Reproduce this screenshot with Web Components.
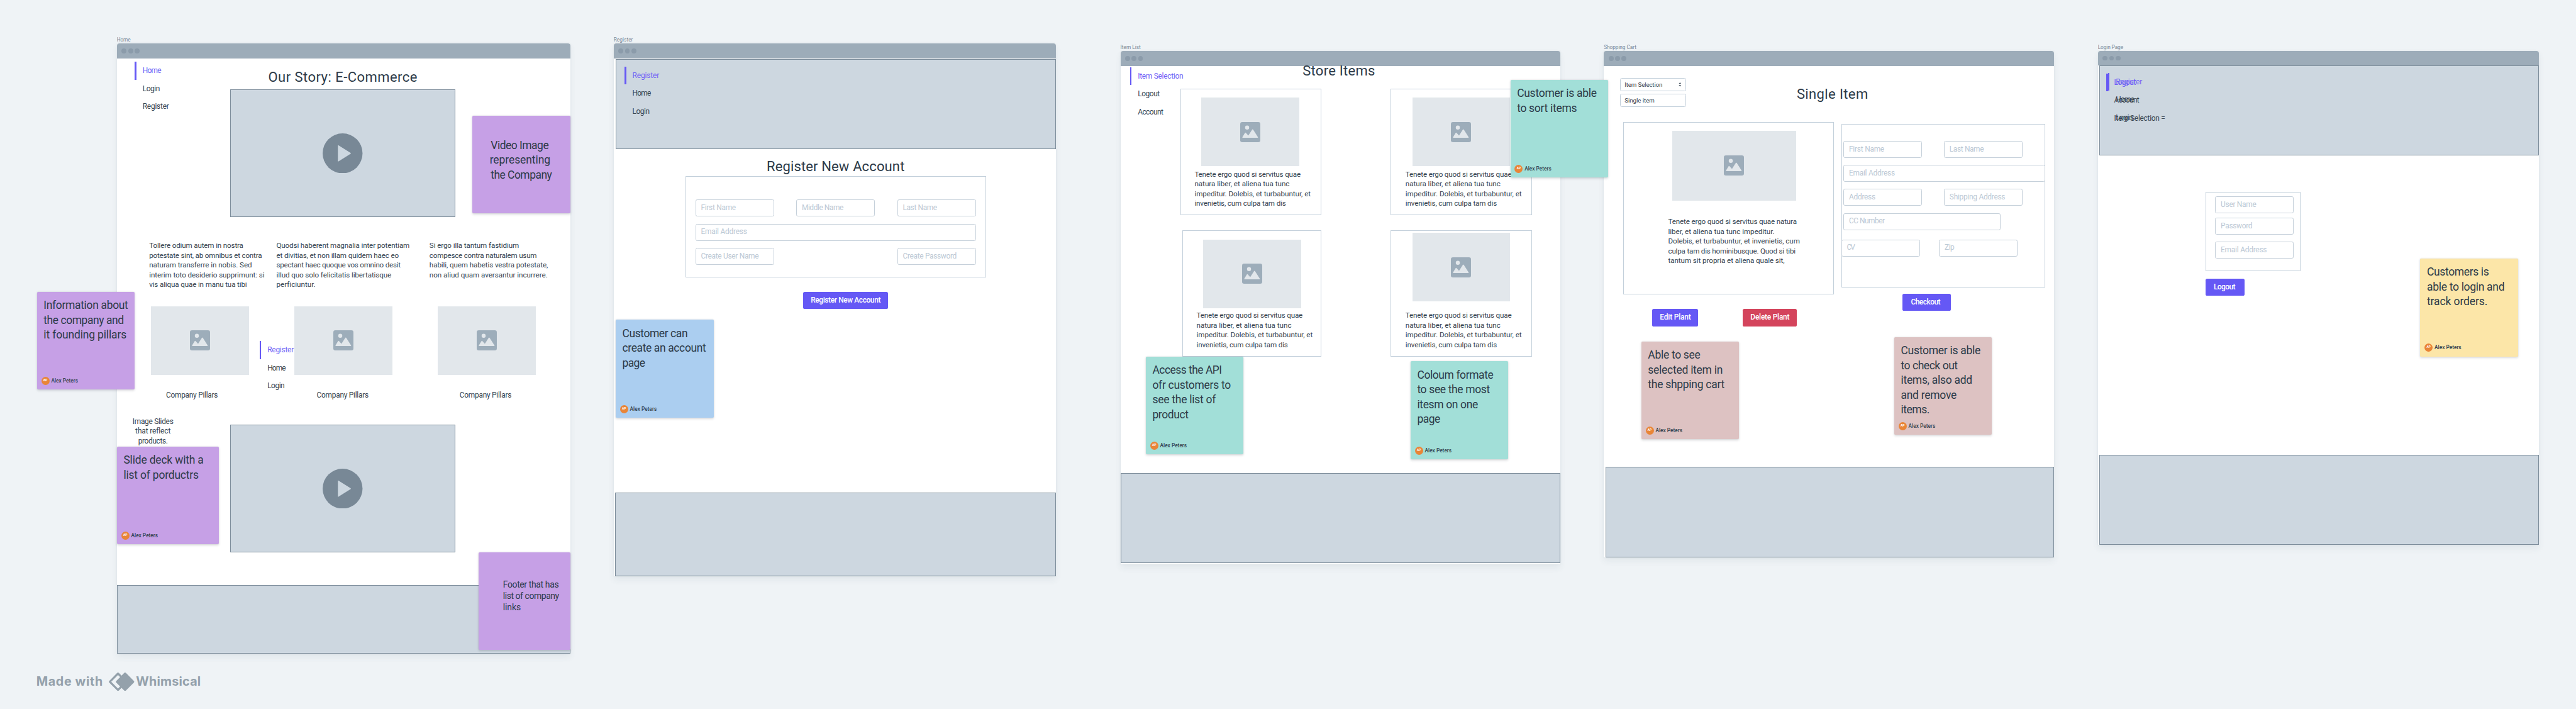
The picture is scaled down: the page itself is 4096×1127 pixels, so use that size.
<!DOCTYPE html>
<html lang="en">
<head>
<meta charset="utf-8">
<title>E-Commerce wireframes</title>
<style>
  html, body { margin: 0; height: 1127px; overflow: hidden; background: #eff3f6; }
  body { font-family: Roboto, "Liberation Sans", sans-serif; font-size: 18.4px; color: #35434f; }
  .row { display: flex; align-items: flex-start; }
  .col { display: flex; flex-direction: column; align-items: flex-start; }
  .center { align-items: center; }
  .para { display: flex; flex-direction: column; font-size: 18px; }
  .title { font-size: 34px; line-height: 40px; color: #2c3a48; }
  .foot { margin-top: auto; }
</style>
</head>
<body>
<wf-canvas>
  <!-- Home -->
  <wf-frame x="287" y="106.3" w="1113" h="1498.2">
    <t-line slot="label" w="32.6">Home</t-line>
    <div class="row">
      <wf-nav style="margin:9px 0 0 44px;width:234.2px"><t-line w="45">Home</t-line><t-line w="41.5">Login</t-line><t-line w="64">Register</t-line></wf-nav>
      <div class="col center" style="width:553.5px">
        <t-line class="title" style="margin-top:27.6px" w="365.3">Our Story: E-Commerce</t-line>
        <wf-video style="margin-top:8.6px"></wf-video>
      </div>
    </div>
    <div class="row" style="margin:59.4px 0 0 79.3px;height:120px">
      <div class="para" style="width:312.4px"><t-line w="230.6">Tollere odium autem in nostra</t-line><t-line w="276.4">potestate sint, ab omnibus et contra</t-line><t-line w="251.7">naturam transferre in nobis. Sed</t-line><t-line w="282.5">interim toto desiderio supprimunt: si</t-line><t-line w="239.4">vis aliqua quae in manu tua tibi</t-line></div>
      <div class="para" style="width:375.8px"><t-line w="326.5">Quodsi haberent magnalia inter potentiam</t-line><t-line w="300">et divitias, et non illam quidem haec eo</t-line><t-line w="304.5">spectant haec quoque vos omnino desit</t-line><t-line w="281.6">illud quo solo felicitatis libertatisque</t-line><t-line w="94.2">perficiuntur.</t-line></div>
      <div class="para"><t-line w="219.1">Si ergo illa tantum fastidium</t-line><t-line w="263">compesce contra naturalem usum</t-line><t-line w="290.4">habili, quem habetis vestra potestate,</t-line><t-line w="289.5">non aliud quam aversantur incurrere.</t-line></div>
    </div>
    <div class="row" style="margin:40px 0 0 83.7px;gap:112px"><wf-image></wf-image><wf-image></wf-image><wf-image></wf-image></div>
    <div class="row" style="margin:39.7px 0 0 120.6px"><t-line w="126.5">Company Pillars</t-line><t-line w="126.5" style="margin-left:243px">Company Pillars</t-line><t-line w="126.5" style="margin-left:224px">Company Pillars</t-line></div>
    <div class="row" style="margin-top:40.3px">
      <div class="col center" style="width:177px"><t-line w="99.5">Image Slides</t-line><t-line w="85.4">that reflect</t-line><t-line w="72">products.</t-line></div>
      <wf-video style="margin:18.8px 0 0 101.2px"></wf-video>
    </div>
    <wf-block class="foot" style="height:169px"></wf-block>
    <wf-nav style="position:absolute;left:350.4px;top:694.8px"><t-line w="64">Register</t-line><t-line w="44.5">Home</t-line><t-line w="41.5">Login</t-line></wf-nav>
  </wf-frame>

  <!-- Register -->
  <wf-frame x="1506.6" y="106.3" w="1085.4" h="1308.7">
    <t-line slot="label" w="46.6">Register</t-line>
    <wf-block style="margin:2px 0 0 4.4px;height:221.5px">
      <wf-nav style="margin:17px 0 0 21px"><t-line w="65">Register</t-line><t-line w="45">Home</t-line><t-line w="41.5">Login</t-line></wf-nav>
    </wf-block>
    <div class="col" style="margin:23.3px 0 0 176.1px;width:738.3px">
      <t-line class="title" style="align-self:center" w="338">Register New Account</t-line>
      <wf-card style="margin-top:2.2px;width:738.3px;height:248.4px;padding:56.8px 23.2px">
        <div class="row" style="justify-content:space-between"><wf-field><t-line w="85">First Name</t-line></wf-field><wf-field><t-line w="101.4">Middle Name</t-line></wf-field><wf-field><t-line w="83.6">Last Name</t-line></wf-field></div>
        <wf-field style="width:auto;margin:17.4px 0"><t-line w="112.4">Email Address</t-line></wf-field>
        <div class="row" style="justify-content:space-between"><wf-field><t-line w="141.3">Create User Name</t-line></wf-field><wf-field><t-line w="131.7">Create Password</t-line></wf-field></div>
      </wf-card>
      <wf-button style="margin:36.3px 0 0 289.3px;width:208.6px"><t-line w="169.5">Register New Account</t-line></wf-button>
    </div>
    <wf-block class="foot" style="margin-left:3.8px;height:206.3px"></wf-block>
  </wf-frame>

  <!-- Item List -->
  <wf-frame x="2751" y="124.8" w="1080" h="1259.8">
    <t-line slot="label" w="49">Item List</t-line>
    <div class="row">
      <wf-nav style="margin:3.6px 0 0 23.6px;width:123.4px"><t-line w="110.7">Item Selection</t-line><t-line w="53">Logout</t-line><t-line w="61.7">Account</t-line></wf-nav>
      <div class="col">
        <t-line class="title" style="margin:-7.7px 0 23.5px 300.4px" w="177">Store Items</t-line>
        <div style="display:grid;grid-template-columns:346.3px 347.3px;gap:37.2px 170.7px">
          <wf-card style="height:310.7px">
            <wf-image style="margin:21.2px 0 0 50px"></wf-image>
            <div class="para" style="margin:8.6px 0 0 33.5px"><t-line w="260">Tenete ergo quod si servitus quae</t-line><t-line w="232.5">natura liber, et aliena tua tunc</t-line><t-line w="284.7">impeditur. Dolebis, et turbabuntur, et</t-line><t-line w="223.8">invenietis, cum culpa tam dis</t-line></div>
          </wf-card>
          <wf-card style="height:310.7px">
            <wf-image style="margin:21.2px 0 0 51px"></wf-image>
            <div class="para" style="margin:8.6px 0 0 34.5px"><t-line w="260">Tenete ergo quod si servitus quae</t-line><t-line w="232.5">natura liber, et aliena tua tunc</t-line><t-line w="284.7">impeditur. Dolebis, et turbabuntur, et</t-line><t-line w="223.8">invenietis, cum culpa tam dis</t-line></div>
          </wf-card>
          <wf-card style="height:311px;margin-left:4.7px">
            <wf-image style="margin:21.6px 0 0 50.3px"></wf-image>
            <div class="para" style="margin:7.5px 0 0 33.6px"><t-line w="260">Tenete ergo quod si servitus quae</t-line><t-line w="232.5">natura liber, et aliena tua tunc</t-line><t-line w="284.7">impeditur. Dolebis, et turbabuntur, et</t-line><t-line w="223.8">invenietis, cum culpa tam dis</t-line></div>
          </wf-card>
          <wf-card style="height:311px">
            <wf-image style="margin:5.1px 0 0 51px"></wf-image>
            <div class="para" style="margin:24px 0 0 34.5px"><t-line w="260">Tenete ergo quod si servitus quae</t-line><t-line w="232.5">natura liber, et aliena tua tunc</t-line><t-line w="284.7">impeditur. Dolebis, et turbabuntur, et</t-line><t-line w="223.8">invenietis, cum culpa tam dis</t-line></div>
          </wf-card>
        </div>
      </div>
    </div>
    <wf-block class="foot" style="height:221.5px;margin-bottom:2.2px"></wf-block>
  </wf-frame>

  <!-- Shopping Cart -->
  <wf-frame x="3938" y="124.8" w="1106" h="1242.8">
    <t-line slot="label" w="79">Shopping Cart</t-line>
    <div class="row" style="height:138px">
      <div class="col" style="margin:29.8px 0 0 39.5px;gap:4.9px">
        <wf-select arrows><t-line w="92">Item Selection</t-line></wf-select>
        <wf-select><t-line w="72.5">Single item</t-line></wf-select>
      </div>
      <t-line class="title" style="margin:49.8px 0 0 271.7px" w="174">Single Item</t-line>
    </div>
    <div class="row" style="margin-left:47.8px;gap:18.1px">
      <div class="col">
        <wf-card style="width:517.7px;height:423.7px">
          <wf-image style="width:303px;height:170.2px;margin:20.8px 0 0 119.2px"></wf-image>
          <div class="para" style="margin:41px 0 0 108.6px"><t-line w="315.3">Tenete ergo quod si servitus quae natura</t-line><t-line w="260.4">liber, et aliena tua tunc impeditur.</t-line><t-line w="322.8">Dolebis, et turbabuntur, et invenietis, cum</t-line><t-line w="312.3">culpa tam dis hominibusque. Quod si tibi</t-line><t-line w="285.2">tantum sit propria et aliena quale sit,</t-line></div>
        </wf-card>
        <div class="row" style="margin:35.8px 0 0 71.5px;gap:109.3px">
          <wf-button style="width:112.7px"><t-line w="74.5">Edit Plant</t-line></wf-button>
          <wf-button style="width:133.2px;--fill:#d4445c"><t-line w="94">Delete Plant</t-line></wf-button>
        </div>
      </div>
      <div class="col">
        <wf-card style="margin-top:4.9px;width:500.4px;height:401.1px;padding:40.1px 0 0 3.3px">
          <div class="row" style="gap:53.6px"><wf-field><t-line w="85.8">First Name</t-line></wf-field><wf-field><t-line w="83.5">Last Name</t-line></wf-field></div>
          <wf-field style="width:495.1px;margin:17.3px 0"><t-line w="112">Email Address</t-line></wf-field>
          <div class="row" style="gap:53.6px"><wf-field><t-line w="64">Address</t-line></wf-field><wf-field><t-line w="136">Shipping Address</t-line></wf-field></div>
          <wf-field style="width:386px;margin:17.3px 0 23.3px"><t-line w="87.3">CC Number</t-line></wf-field>
          <div class="row" style="gap:46.9px;margin-left:-5.3px"><wf-field><t-line w="19.6">CV</t-line></wf-field><wf-field><t-line w="23.3">Zip</t-line></wf-field></div>
        </wf-card>
        <wf-button style="width:118.1px;margin:15.4px 0 0 149.8px;padding-right:5px"><t-line w="71">Checkout</t-line></wf-button>
      </div>
    </div>
    <wf-block class="foot" style="margin-left:4.9px;height:221.2px"></wf-block>
  </wf-frame>

  <!-- Login Page -->
  <wf-frame x="5151" y="124.6" w="1083" h="1212.4">
    <t-line slot="label" w="61.4">Login Page</t-line>
    <wf-block style="height:220.5px;margin-left:3px;display:grid;justify-items:start;align-items:start">
      <wf-nav style="grid-area:1/1;margin:16.1px 0 0 20.2px"><t-line w="64">Register</t-line><t-line w="45">Home</t-line><t-line w="41.5">Login</t-line></wf-nav>
      <wf-nav style="grid-area:1/1;margin:17.6px 0 0 16.2px"><t-line w="52.5">Logout</t-line><t-line w="61">Account</t-line><t-line w="124.5">Item Selection =</t-line></wf-nav>
    </wf-block>
    <div class="col" style="margin:89.3px 0 0 264px;gap:17.6px">
      <wf-card style="width:233px;height:195.3px;padding:10px 0 0 22.6px">
        <wf-field><t-line w="86.6">User Name</t-line></wf-field>
        <wf-field style="margin:10.3px 0 17.5px"><t-line w="77">Password</t-line></wf-field>
        <wf-field><t-line w="112.5">Email Address</t-line></wf-field>
      </wf-card>
      <wf-button style="width:96.4px;padding-right:3px"><t-line w="52">Logout</t-line></wf-button>
    </div>
    <wf-block class="foot" style="margin-left:3px;height:221.3px"></wf-block>
  </wf-frame>

  <!-- Notes -->
  <wf-note x="1160" y="284" color="#c6a0e6" bare style="--pad:55px 0 0 42.4px"><t-line w="141.7" style="margin-left:2.6px">Video Image</t-line><t-line w="148">representing</t-line><t-line w="149.6" style="margin-left:2.6px">the Company</t-line></wf-note>
  <wf-note x="90.8" y="716.2" color="#c6a0e6"><t-line w="206.8">Information about</t-line><t-line w="196.3">the company and</t-line><t-line w="202.8">it founding pillars</t-line></wf-note>
  <wf-note x="287" y="1096" w="250" color="#c6a0e6"><t-line w="196">Slide deck with a</t-line><t-line w="184">list of porductrs</t-line></wf-note>
  <wf-note x="1175" y="1355.7" w="225" color="#c6a0e6" bare style="--pad:64.6px 0 0 60px;--size:21.6px;--line:28.1px"><t-line w="136.4">Footer that has</t-line><t-line w="137.3">list of company</t-line><t-line w="43">links</t-line></wf-note>
  <wf-note x="1511.7" y="785" color="#abcef0"><t-line w="159.8">Customer can</t-line><t-line w="204.9">create an account</t-line><t-line w="55.4">page</t-line></wf-note>
  <wf-note x="3708.5" y="195.8" color="#a2dfd8"><t-line w="195.3">Customer is able</t-line><t-line w="146.3">to sort items</t-line></wf-note>
  <wf-note x="2813.3" y="875" color="#a2dfd8"><t-line w="170">Access the API</t-line><t-line w="192">ofr customers to</t-line><t-line w="155">see the list of</t-line><t-line w="87.8">product</t-line></wf-note>
  <wf-note x="3463.4" y="886.7" color="#a2dfd8"><t-line w="186.6">Coloum formate</t-line><t-line w="178">to see the most</t-line><t-line w="148.7">itesm on one</t-line><t-line w="56">page</t-line></wf-note>
  <wf-note x="4030" y="838" color="#ddc2c2"><t-line w="128">Able to see</t-line><t-line w="183">selected item in</t-line><t-line w="187.4">the shpping cart</t-line></wf-note>
  <wf-note x="4651" y="827.6" color="#ddc2c2"><t-line w="195">Customer is able</t-line><t-line w="139">to check out</t-line><t-line w="174.6">items, also add</t-line><t-line w="136.2">and remove</t-line><t-line w="70">items.</t-line></wf-note>
  <wf-note x="5942.7" y="634.6" color="#fce6a8"><t-line w="151.7">Customers is</t-line><t-line w="190">able to login and</t-line><t-line w="148">track orders.</t-line></wf-note>

  <made-with></made-with>
</wf-canvas>

<script>
const pen = document.createElement('canvas').getContext('2d');

/* Registers an element whose open shadow root is cloned from the given markup. */
function define(name, html, setup) {
  const tpl = document.createElement('template');
  tpl.innerHTML = html;
  customElements.define(name, class extends HTMLElement {
    constructor() {
      super();
      this.attachShadow({ mode: 'open' }).append(tpl.content.cloneNode(true));
    }
    connectedCallback() { if (setup) setup(this); }
  });
}
const num = (el, a, d) => parseFloat(el.getAttribute(a) ?? d);
function place(el) {
  el.style.left = num(el, 'x', 0) + 'px';
  el.style.top = num(el, 'y', 0) + 'px';
}

define('wf-canvas', `<style>
  :host { display: block; position: relative; width: 6325px; height: 1741px; zoom: .64759; background: #eff3f6; overflow: hidden; }
</style><slot></slot>`);

define('wf-frame', `<style>
  :host { display: flex; flex-direction: column; position: absolute; border-radius: 6px 6px 0 0; background: #fff;
    box-shadow: 0 0 5px rgba(60,80,100,.07), 0 8px 16px rgba(60,80,100,.07); }
  .label { position: absolute; left: 0; top: -20px; font-size: 12.8px; color: #788896; --lh: 24px; }
  .bar { flex: none; height: 36.6px; background: #9dacb9; border-radius: 6px 6px 0 0; display: flex; align-items: center; gap: 3.9px; padding-left: 11.8px; box-sizing: border-box; }
  .bar i { width: 12px; height: 12px; border-radius: 50%; background: #8b9baa; }
  .body { flex: 1; position: relative; display: flex; flex-direction: column; min-height: 0; }
</style><div class="label"><slot name="label"></slot></div>
<div class="bar"><i></i><i></i><i></i></div><div class="body"><slot></slot></div>`, el => {
  place(el);
  el.style.width = num(el, 'w') + 'px';
  el.style.height = num(el, 'h') + 'px';
});

/* Font size in canvas units. */
function sizeOf(el) {
  if (el.classList.contains('title')) return 34;
  if (el.slot === 'label') return 12.8;
  const host = el.closest('wf-note, wf-select');
  if (host) return host.localName === 'wf-select' ? 15 : parseFloat(host.style.getPropertyValue('--size') || 27);
  return el.closest('.para') ? 18 : 18.4;
}

/* A single line of text, tracked so that it sets to the width in its w attribute. */
define('t-line', `<style>
  :host { display: block; flex: none; white-space: pre; line-height: var(--lh, 24px); width: max-content; }
  :host(.title) { line-height: 40px; }
</style><slot></slot>`, el => {
  const text = el.textContent, size = sizeOf(el);
  pen.font = getComputedStyle(el).fontWeight + ' 100px Roboto';
  const natural = pen.measureText(text).width / 100 * size;
  el.style.letterSpacing = ((num(el, 'w') + 1 - natural) / (text.length - 1) / size).toFixed(5) + 'em';
});

define('wf-nav', `<style>
  :host { display: flex; flex-direction: column; box-sizing: border-box; --lh: 44px; position: relative; }
  ::slotted(*) { margin-left: 19.2px; }
  ::slotted(:first-child) { color: #6f62f6; }
  .mark { position: absolute; left: 0; top: 0; width: 4px; height: 44px; background: #6558f5; }
</style><i class="mark"></i><slot></slot>`);

define('wf-block', `<style>
  :host { display: block; flex: none; box-sizing: border-box; background: #cdd7e0; border: 2px solid #7d8d9b; }
</style><slot></slot>`);

define('wf-card', `<style>
  :host { display: block; flex: none; box-sizing: border-box; border: 2px solid #c3d0db; }
</style><slot></slot>`);

define('wf-video', `<style>
  :host { display: flex; align-items: center; justify-content: center; box-sizing: border-box; width: 553.5px; height: 313.4px; background: #cdd7e0; border: 2px solid #7d8d9b; }
  svg { width: 98px; height: 98px; }
</style><svg viewBox="0 0 98 98"><circle cx="49" cy="49" r="49" fill="#788896"/><path d="M37.5 30v38q0 1.6 1.5.8L68.6 50.2q1.5-1.2 0-2.4L39 29.2q-1.5-.8-1.5.8z" fill="#cdd7e0"/></svg>`);

define('wf-image', `<style>
  :host { display: flex; align-items: center; justify-content: center; width: 240.4px; height: 167.8px; background: #e2e7eb; }
  svg { width: 49.4px; height: 49.4px; }
</style><svg viewBox="0 0 148 148"><rect width="148" height="148" rx="15" fill="#9dadba"/><circle cx="51" cy="41" r="15" fill="#e2e7eb"/><path d="M16 111 35 80q3.5-5.5 7 0L60 99 88 56q3.5-5 7 0l35.5 55q2 5-3 5H19q-5 0-3-5z" fill="#e2e7eb"/></svg>`);

define('wf-field', `<style>
  :host { display: flex; flex: none; align-items: center; box-sizing: border-box; width: 193.2px; height: 41.7px; padding-left: 12px; border: 2px solid #c5d0da; border-radius: 4px; color: #bbc8d4; background: #fff; }
</style><slot></slot>`);

define('wf-select', `<style>
  :host { display: flex; align-items: center; justify-content: space-between; box-sizing: border-box; width: 162.5px; height: 33.5px; padding: 0 10px; border: 2px solid #c3d0db; border-radius: 4px; font-size: 15px; }
  svg { display: none; width: 7px; height: 10px; }
  :host([arrows]) svg { display: block; }
</style><slot></slot><svg viewBox="0 0 7 10"><path d="M.5 3.5h6L3.5 0zM.5 6.5h6L3.5 10z" fill="#3b4956"/></svg>`);

define('wf-button', `<style>
  :host { display: flex; flex: none; align-items: center; justify-content: center; box-sizing: border-box; height: 42.4px; border-radius: 4px; background: var(--fill, #6558f5); color: #fff; font-weight: 500; }
</style><slot></slot>`);

define('wf-note', `<style>
  :host { display: flex; flex-direction: column; position: absolute; box-sizing: border-box; height: 240.2px; border-radius: 3px; color: #2c3a48;
    font-size: var(--size, 27px); --lh: var(--line, 36.3px); box-shadow: 0 3px 6px rgba(40,50,60,.17), 0 0 3px rgba(40,50,60,.12); }
  .text { display: flex; flex-direction: column; padding: var(--pad, 16px 0 0 16.3px); }
  .by { margin-top: auto; display: flex; align-items: center; gap: 4.5px; padding: 0 0 11px 10.5px; font-size: 12.8px; font-weight: 500; line-height: 20px; letter-spacing: .05px; color: #33424f; }
  .by b { width: 20px; height: 20px; border-radius: 50%; background: #e98537; color: #fff; font-size: 7.5px; text-align: center; letter-spacing: 0; }
</style><div class="text"><slot></slot></div>`, el => {
  place(el);
  el.style.width = num(el, 'w', 240.2) + 'px';
  el.style.background = el.getAttribute('color');
  if (!el.hasAttribute('bare')) {
    const by = document.createElement('div');
    by.className = 'by';
    by.innerHTML = '<b>AP</b><span>Alex Peters</span>';
    el.shadowRoot.append(by);
  }
});

define('made-with', `<style>
  :host { display: flex; align-items: center; position: absolute; left: 89px; top: 1650px; height: 45.4px; color: #94a1ab; font: 700 30.5px/45px Inter, sans-serif; }
  svg { width: 62.6px; height: 45.3px; margin: 0 4px 0 13.5px; }
  span { white-space: pre; }
  .a { letter-spacing: 1px; width: 164.8px; }
  .b { letter-spacing: .35px; }
</style><span class="a">Made with</span><svg viewBox="0 0 188 136" fill="#94a1ab"><path d="M61 4q7-7 14 0l57 57q7 7 0 14l-57 57q-7 7-14 0L4 75q-7-7 0-14z"/><path d="M18 68 68 18 86 36 54 68 86 100 68 118z" fill="#eff3f6"/><path d="M113 4q7-7 14 0l57 57q7 7 0 14l-57 57q-7 7-14 0L56 75q-7-7 0-14z"/></svg><span class="b">Whimsical</span>`);
</script>
</body>
</html>
